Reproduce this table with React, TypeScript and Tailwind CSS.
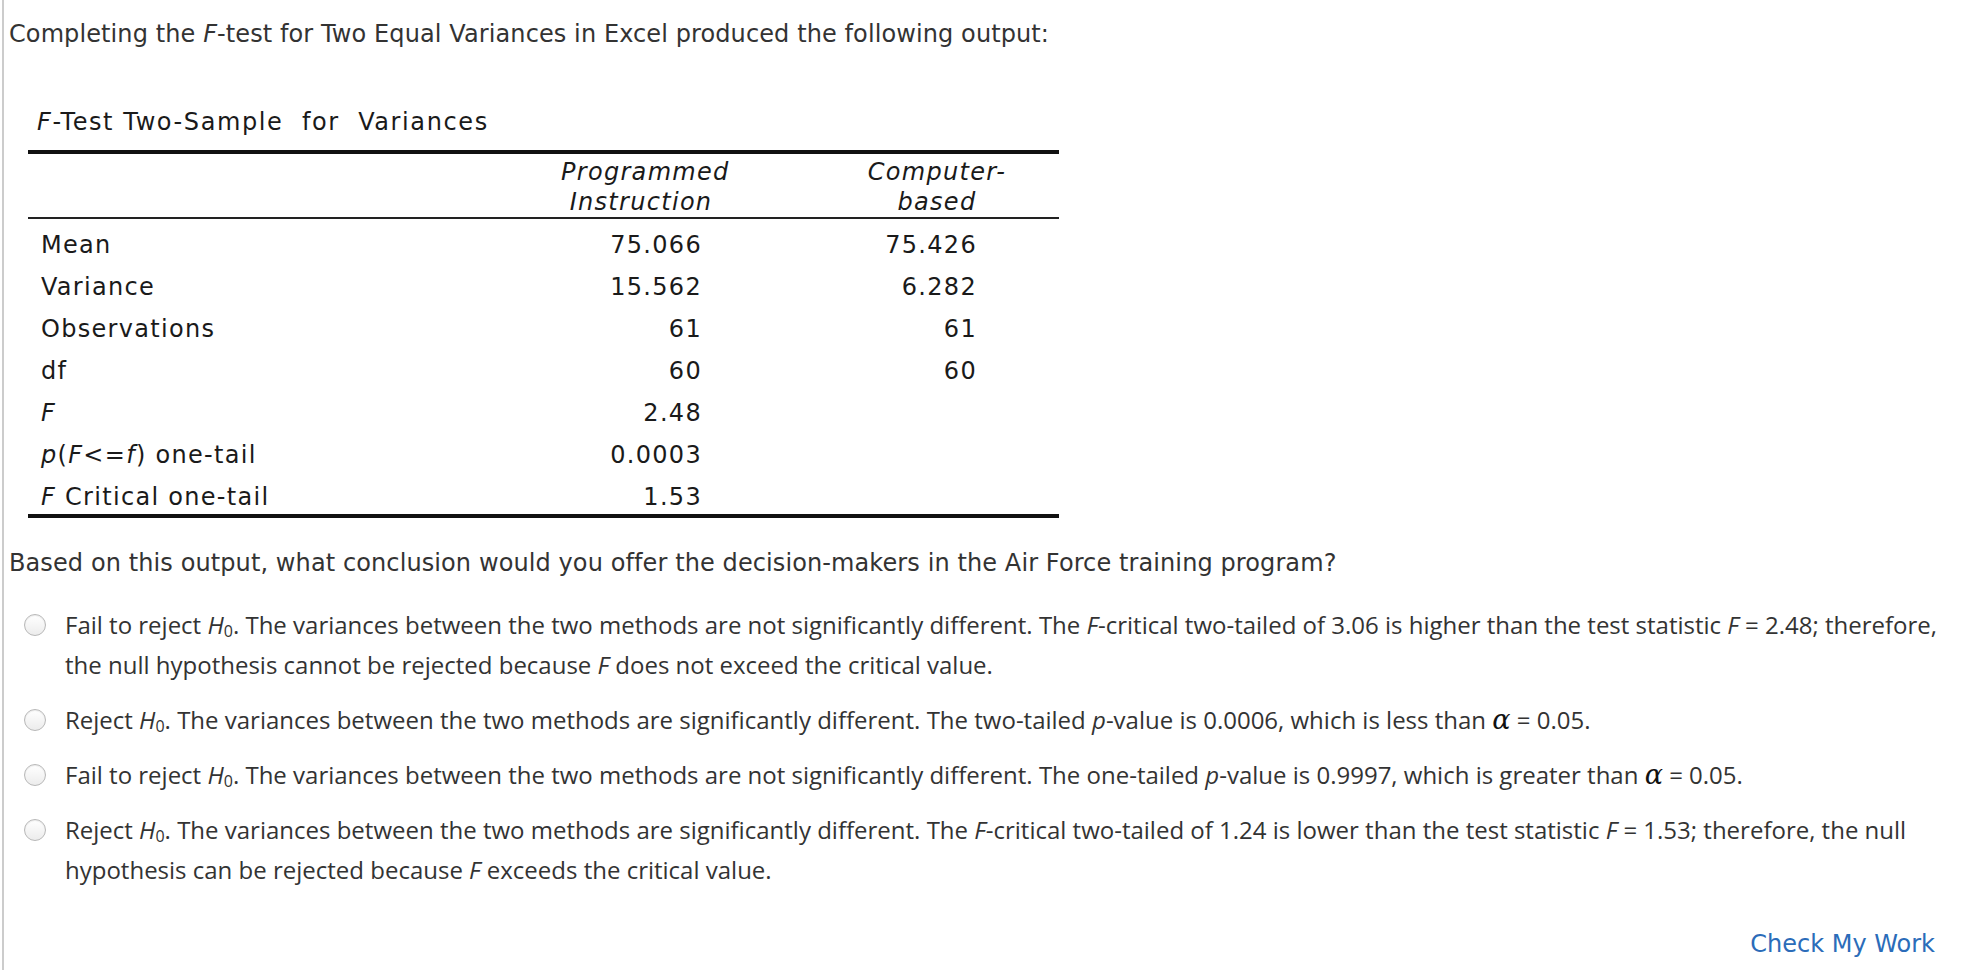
import React from "react";

const V = { fontFamily: '"DejaVu Sans", Verdana, sans-serif' };
const O = { fontFamily: '"Open Sans", "Noto Sans", sans-serif' };
const A = { fontFamily: '"DejaVu Serif", "Liberation Serif", serif' };

function H0() {
  return (
    <>
      <i>H</i>
      <span className="text-[16px] leading-[0] align-[-3px]">0</span>
    </>
  );
}

function Alpha() {
  return (
    <i className="text-[27px] leading-[0] text-[#111]" style={A}>
      α
    </i>
  );
}

function Radio() {
  return (
    <span className="mt-[9px] ml-[15px] block h-[22px] w-[22px] shrink-0 rounded-full border border-[#b8b8b8] bg-gradient-to-b from-[#ffffff] to-[#ececec] shadow-[inset_0_1px_1px_rgba(0,0,0,0.08)]" />
  );
}

function Option({ children, last }: { children: React.ReactNode; last?: boolean }) {
  return (
    <div className={"flex items-start " + (last ? "" : "mb-[15px]")}>
      <Radio />
      <div className="ml-[19px] text-[24px] leading-[40px] text-[#333333]" style={O}>
        {children}
      </div>
    </div>
  );
}

type Row = { label: React.ReactNode; a: string; b: string };

const rows: Row[] = [
  { label: "Mean", a: "75.066", b: "75.426" },
  { label: "Variance", a: "15.562", b: "6.282" },
  { label: "Observations", a: "61", b: "61" },
  { label: "df", a: "60", b: "60" },
  { label: <i>F</i>, a: "2.48", b: "" },
  {
    label: (
      <>
        <i>p</i>(<i>F</i>&lt;=<i>f</i>) one-tail
      </>
    ),
    a: "0.0003",
    b: "",
  },
  {
    label: (
      <>
        <i>F</i> Critical one-tail
      </>
    ),
    a: "1.53",
    b: "",
  },
];

export default function App() {
  return (
    <div className="min-h-[970px] w-[1976px] bg-white">
      <div className="ml-[2px] min-h-[970px] border-l-2 border-[#cccccc] pl-[5px]">
        <p className="pt-[20px] text-[24px] leading-[28px] tracking-[0.1px] text-[#333333]" style={V}>
          Completing the <i>F</i>-test for Two Equal Variances in Excel produced the following output:
        </p>

        <div className="mt-[60px] ml-[19px] w-[1031px] text-[#1a1a1a] tracking-[1.3px]" style={V}>
          <div className="pl-[9px] text-[24px] leading-[28px] tracking-[1.6px]">
            <i>F</i>-Test Two-Sample&nbsp; for&nbsp; Variances
          </div>
          <div className="mt-[14px] border-t-4 border-[#111111]" />
          <div className="flex h-[63px] pt-[3px] text-[24px] leading-[30px] italic">
            <div className="w-[533px]" />
            <div className="w-[160px] text-center">
              Programmed
              <br />
              Instruction
            </div>
            <div className="w-[136px]" />
            <div className="w-[160px] text-center">
              Computer-
              <br />
              based
            </div>
          </div>
          <div className="border-t-2 border-[#222222]" />
          <div className="pt-[5px] text-[24px]">
            {rows.map((r, i) => (
              <div
                key={i}
                className={"flex leading-[42px] " + (i === rows.length - 1 ? "h-[38px]" : "h-[42px]")}
              >
                <div className="w-[533px] pl-[13px]">{r.label}</div>
                <div className="w-[160px] pr-[19px] text-right">{r.a}</div>
                <div className="w-[136px]" />
                <div className="w-[160px] pr-[40px] text-right">{r.b}</div>
              </div>
            ))}
          </div>
          <div className="border-t-4 border-[#111111]" />
        </div>

        <p className="mt-[31px] text-[24px] leading-[28px] tracking-[0.1px] text-[#333333]" style={V}>
          Based on this output, what conclusion would you offer the decision-makers in the Air Force training program?
        </p>

        <div className="mt-[28px] pr-[20px]">
          <Option>
            Fail to reject <H0 />. The variances between the two methods are not significantly different. The{" "}
            <i>F</i>-critical two-tailed of 3.06 is higher than the test statistic <i>F</i> = 2.48; therefore, the
            null hypothesis cannot be rejected because <i>F</i> does not exceed the critical value.
          </Option>
          <Option>
            Reject <H0 />. The variances between the two methods are significantly different. The two-tailed{" "}
            <i>p</i>-value is 0.0006, which is less than <Alpha /> = 0.05.
          </Option>
          <Option>
            Fail to reject <H0 />. The variances between the two methods are not significantly different. The
            one-tailed <i>p</i>-value is 0.9997, which is greater than <Alpha /> = 0.05.
          </Option>
          <Option last>
            Reject <H0 />. The variances between the two methods are significantly different. The <i>F</i>-critical
            two-tailed of 1.24 is lower than the test statistic <i>F</i> = 1.53; therefore, the null hypothesis can be
            rejected because <i>F</i> exceeds the critical value.
          </Option>
        </div>

        <div className="mt-[40px] pr-[41px] text-right text-[24px] leading-[28px] text-[#2b6cb9]" style={V}>
          Check My Work
        </div>
      </div>
    </div>
  );
}
